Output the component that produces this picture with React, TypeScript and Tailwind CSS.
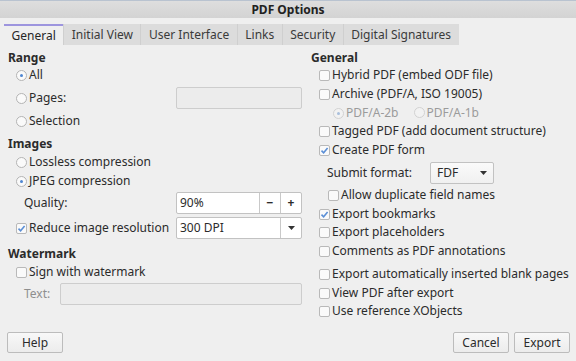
import React from 'react'

const FONT = { fontFamily: '"Noto Sans", "Open Sans", sans-serif' }

const TABS = ['General', 'Initial View', 'User Interface', 'Links', 'Security', 'Digital Signatures']

function Check({ checked, className = '' }: { checked?: boolean; className?: string }) {
  return (
    <span className={`inline-flex w-[11px] h-[11px] shrink-0 items-center justify-center rounded-[2px] border border-[#b9b9b9] bg-[#fafafa] ${className}`}>
      {checked && (
        <svg width="9" height="9" viewBox="0 0 9 9">
          <path d="M1.5 4.6 L3.6 6.7 L7.6 2" fill="none" stroke="#5b8fd6" strokeWidth="1.6" />
        </svg>
      )}
    </span>
  )
}

function Radio({ checked, disabled }: { checked?: boolean; disabled?: boolean }) {
  return (
    <span
      className={`inline-flex w-[11px] h-[11px] shrink-0 items-center justify-center rounded-full border ${
        disabled ? 'border-[#d2d2d2] bg-[#f2f2f2]' : 'border-[#b4b4b4] bg-[#fafafa]'
      }`}
    >
      {checked && <span className={`w-[3px] h-[3px] rounded-full ${disabled ? 'bg-[#a9bfdc]' : 'bg-[#4f86d1]'}`} />}
    </span>
  )
}

function Row({ children, className = '' }: { children: React.ReactNode; className?: string }) {
  return <div className={`flex items-center ${className}`}>{children}</div>
}

function Button({ children, className = '' }: { children: React.ReactNode; className?: string }) {
  return (
    <div
      className={`flex h-[21px] w-[56px] items-center justify-center rounded-[2px] border border-[#bcbcbc] bg-gradient-to-b from-[#f8f8f8] to-[#ececec] text-[#2b2b2b] ${className}`}
    >
      {children}
    </div>
  )
}

export default function App() {
  return (
    <div style={FONT} className="w-[576px] h-[361px] overflow-hidden bg-[#efefef] text-[12px] leading-none text-[#2b2b2b]">
      {/* title bar */}
      <div className="flex h-[18px] items-center justify-center border-t border-[#b9c3d0] bg-gradient-to-b from-[#dedede] to-[#d3d3d3] text-[12px] font-bold text-[#222]">
        PDF Options
      </div>

      {/* tabs */}
      <div className="mt-[6px] flex h-[21px] pl-[4px]">
        {TABS.map((t, i) => (
          <div
            key={t}
            className={`flex h-full items-center px-[7.5px] text-[12px] ${
              i === 0
                ? 'border-t-2 border-[#9d95de] bg-[#efefef] text-[#262626]'
                : 'border-l border-[#cfcfcf] bg-[#dcdcdc] text-[#3a3a3a]'
            }`}
          >
            {t}
          </div>
        ))}
      </div>

      <div className="flex">
        {/* left column */}
        <div className="ml-[8px] flex w-[294px] flex-col">
          <Row className="mt-[4px] h-[18px] font-bold">Range</Row>
          <Row className="h-[16px] pl-[8px] gap-[2px]">
            <Radio checked />
            <span>All</span>
          </Row>
          <Row className="mt-[4px] h-[22px] pl-[8px] gap-[2px]">
            <Radio />
            <span>Pages:</span>
            <div className="ml-auto h-[22px] w-[126px] rounded-[2px] border border-[#cdcdcd] bg-[#ececec]" />
          </Row>
          <Row className="mt-[1px] h-[22px] pl-[8px] gap-[2px]">
            <Radio />
            <span>Selection</span>
          </Row>
          <Row className="mt-[3px] h-[18px] font-bold">Images</Row>
          <Row className="h-[18px] pl-[8px] gap-[2px]">
            <Radio />
            <span>Lossless compression</span>
          </Row>
          <Row className="mt-[1px] h-[18px] pl-[8px] gap-[2px]">
            <Radio checked />
            <span>JPEG compression</span>
          </Row>
          <Row className="mt-[2px] h-[22px] pl-[16px]">
            <span>Quality:</span>
            <div className="ml-auto flex h-[22px] w-[126px] rounded-[2px] border border-[#c2c2c2] bg-white">
              <span className="flex flex-1 items-center pl-[3px]">90%</span>
              <span className="flex w-[21px] items-center justify-center border-l border-[#c9c9c9] font-bold">−</span>
              <span className="flex w-[21px] items-center justify-center border-l border-[#c9c9c9] font-bold">+</span>
            </div>
          </Row>
          <Row className="mt-[3px] h-[22px] pl-[8px] gap-[2px]">
            <Check checked />
            <span>Reduce image resolution</span>
            <div className="ml-auto flex h-[22px] w-[126px] rounded-[2px] border border-[#c2c2c2] bg-white">
              <span className="flex flex-1 items-center pl-[3px]">300 DPI</span>
              <span className="flex w-[21px] items-center justify-center border-l border-[#c9c9c9]">
                <svg width="7" height="4" viewBox="0 0 7 4">
                  <path d="M0 0 H7 L3.5 4 Z" fill="#333" />
                </svg>
              </span>
            </div>
          </Row>
          <Row className="mt-[6px] h-[18px] font-bold">Watermark</Row>
          <Row className="h-[18px] pl-[8px] gap-[2px]">
            <Check />
            <span>Sign with watermark</span>
          </Row>
          <Row className="mt-[2px] h-[22px] pl-[16px]">
            <span className="text-[#8e8e8e]">Text:</span>
            <div className="ml-auto h-[22px] w-[242px] rounded-[2px] border border-[#cdcdcd] bg-[#ececec]" />
          </Row>
        </div>

        {/* right column */}
        <div className="ml-[9px] flex flex-1 flex-col">
          <Row className="mt-[4px] h-[18px] font-bold">General</Row>
          <Row className="h-[16px] pl-[8px] gap-[2px]">
            <Check />
            <span>Hybrid PDF (embed ODF file)</span>
          </Row>
          <Row className="mt-[2px] h-[18px] pl-[8px] gap-[2px]">
            <Check />
            <span>Archive (PDF/A, ISO 19005)</span>
          </Row>
          <Row className="mt-[1px] h-[18px] pl-[22px] gap-[2px] text-[#9b9b9b]">
            <Radio checked disabled />
            <span>PDF/A-2b</span>
            <span className="ml-[13px]">
              <Radio disabled />
            </span>
            <span>PDF/A-1b</span>
          </Row>
          <Row className="h-[18px] pl-[8px] gap-[2px]">
            <Check />
            <span>Tagged PDF (add document structure)</span>
          </Row>
          <Row className="mt-[1px] h-[18px] pl-[8px] gap-[2px]">
            <Check checked />
            <span>Create PDF form</span>
          </Row>
          <Row className="mt-[3px] h-[22px] pl-[16px]">
            <span className="w-[103px]">Submit format:</span>
            <div className="flex h-[22px] w-[64px] items-center justify-between rounded-[2px] border border-[#c2c2c2] bg-gradient-to-b from-[#fafafa] to-[#f0f0f0] px-[6px]">
              <span>FDF</span>
              <svg width="7" height="4" viewBox="0 0 7 4">
                <path d="M0 0 H7 L3.5 4 Z" fill="#333" />
              </svg>
            </div>
          </Row>
          <Row className="mt-[2px] h-[18px] pl-[17px] gap-[2px]">
            <Check />
            <span>Allow duplicate field names</span>
          </Row>
          <Row className="mt-[1px] h-[18px] pl-[8px] gap-[2px]">
            <Check checked />
            <span>Export bookmarks</span>
          </Row>
          <Row className="h-[18px] pl-[8px] gap-[2px]">
            <Check />
            <span>Export placeholders</span>
          </Row>
          <Row className="mt-[1px] h-[18px] pl-[8px] gap-[2px]">
            <Check />
            <span>Comments as PDF annotations</span>
          </Row>
          <Row className="mt-[5px] h-[18px] pl-[8px] gap-[2px]">
            <Check />
            <span>Export automatically inserted blank pages</span>
          </Row>
          <Row className="mt-[1px] h-[18px] pl-[8px] gap-[2px]">
            <Check />
            <span>View PDF after export</span>
          </Row>
          <Row className="h-[18px] pl-[8px] gap-[2px]">
            <Check />
            <span>Use reference XObjects</span>
          </Row>
        </div>
      </div>

      {/* buttons */}
      <div className="mt-[12px] flex px-[6px]">
        <Button className="ml-[1px]">Help</Button>
        <Button className="ml-auto">Cancel</Button>
        <Button className="ml-[5px]">Export</Button>
      </div>
    </div>
  )
}
